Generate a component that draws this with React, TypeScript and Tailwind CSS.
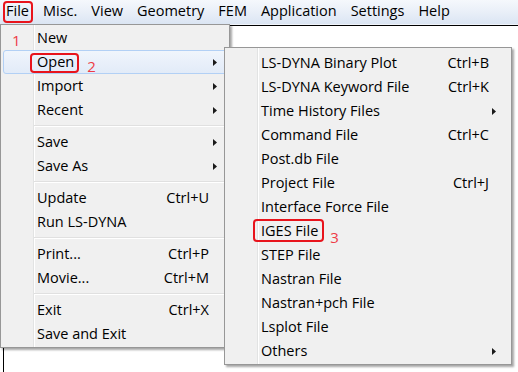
import React from 'react';

type Mark = { box: string; num?: string; numClass?: string };

type Item =
  | { sep: true }
  | { label: string; shortcut?: string; arrow?: boolean; active?: boolean; mark?: Mark; gutterNum?: string };

const fileItems: Item[] = [
  { label: 'New', gutterNum: '1' },
  { label: 'Open', arrow: true, active: true, mark: { box: '-left-[7px] -right-[5px] top-[2px] bottom-0', num: '2', numClass: 'ml-[13px] mt-[8px]' } },
  { label: 'Import', arrow: true },
  { label: 'Recent', arrow: true },
  { sep: true },
  { label: 'Save', arrow: true },
  { label: 'Save As', arrow: true },
  { sep: true },
  { label: 'Update', shortcut: 'Ctrl+U' },
  { label: 'Run LS-DYNA' },
  { sep: true },
  { label: 'Print...', shortcut: 'Ctrl+P' },
  { label: 'Movie...', shortcut: 'Ctrl+M' },
  { sep: true },
  { label: 'Exit', shortcut: 'Ctrl+X' },
  { label: 'Save and Exit' },
];

const openItems: Item[] = [
  { label: 'LS-DYNA Binary Plot', shortcut: 'Ctrl+B' },
  { label: 'LS-DYNA Keyword File', shortcut: 'Ctrl+K' },
  { label: 'Time History Files', arrow: true },
  { label: 'Command File', shortcut: 'Ctrl+C' },
  { label: 'Post.db File' },
  { label: 'Project File', shortcut: 'Ctrl+J' },
  { label: 'Interface Force File' },
  { label: 'IGES File', mark: { box: '-left-[8px] -right-[6px] -top-[1px] bottom-0', num: '3', numClass: 'ml-[12px] mt-[12px]' } },
  { label: 'STEP File' },
  { label: 'Nastran File' },
  { label: 'Nastran+pch File' },
  { label: 'Lsplot File' },
  { label: 'Others', arrow: true },
];

const menuBar = ['File', 'Misc.', 'View', 'Geometry', 'FEM', 'Application', 'Settings', 'Help'];

const redBox = 'absolute border-2 border-[#e8141c] rounded-[4px] pointer-events-none';
const redNum = 'text-[15px] leading-none text-[#ee3b47]';

const Arrow = () => (
  <svg width="4" height="7" viewBox="0 0 4 7" className="shrink-0">
    <polygon points="0,0 4,3.5 0,7" fill="#1a1a1a" />
  </svg>
);

const MenuRows = ({ items, shortcutRight, arrowRight }: { items: Item[]; shortcutRight: string; arrowRight: string }) => (
  <>
    {items.map((it, i) =>
      'sep' in it ? (
        <div key={i} className="h-[8px] pl-[33px] pr-[2px] flex flex-col justify-center">
          <div className="h-px bg-[#e0e0e0]" />
          <div className="h-px bg-white" />
        </div>
      ) : (
        <div
          key={i}
          className={`h-[24px] flex items-stretch mx-[2px] border ${
            it.active
              ? 'rounded-[3px] border-[#b2d0f5] bg-gradient-to-b from-[#f0f5fc] to-[#e2ebf8]'
              : 'border-transparent'
          }`}
        >
          <div className="w-[33px] shrink-0 flex items-center pl-[8px]">
            {it.gutterNum && <span className={`${redNum} mt-[4px]`}>{it.gutterNum}</span>}
          </div>
          <div className="flex-1 flex items-center whitespace-nowrap">
            <span className="relative h-full flex items-center">
              {it.label}
              {it.mark && <span className={`${redBox} ${it.mark.box}`} />}
            </span>
            {it.mark?.num && <span className={`${redNum} ${it.mark.numClass}`}>{it.mark.num}</span>}
          </div>
          {it.shortcut && <span className={`flex items-center whitespace-nowrap ${shortcutRight}`}>{it.shortcut}</span>}
          {it.arrow && (
            <span className={`flex items-center ${arrowRight}`}>
              <Arrow />
            </span>
          )}
        </div>
      )
    )}
  </>
);

const menuPanel =
  'absolute border border-[#979797] shadow-[2px_2px_2px_rgba(0,0,0,0.35)] bg-[linear-gradient(to_right,#f0f0f0_32px,#e2e3e3_32px,#e2e3e3_33px,#ffffff_33px,#ffffff_34px,#f0f0f0_34px)]';

export default function App() {
  return (
    <div
      className="relative w-[518px] h-[372px] overflow-hidden bg-white text-[14.5px] text-black"
      style={{ fontFamily: '"Segoe UI", "Open Sans", "Noto Sans", sans-serif' }}
    >
      {/* menu bar */}
      <div className="h-[25px] flex items-start pl-[6px] gap-[14px] bg-gradient-to-b from-[#f5f8fc] via-[#e9eff8] to-[#dbe5f3] border-b border-[#f0f4fa]">
        {menuBar.map((m) => (
          <span key={m} className="relative h-[23px] flex items-center leading-none">
            {m}
            {m === 'File' && <span className={`${redBox} -left-[3px] -right-[4px] top-[1px] bottom-0`} />}
          </span>
        ))}
      </div>
      {/* child window */}
      <div className="ml-[3px] h-[347px] border-t border-l border-black bg-white" />

      {/* File menu */}
      <div className={`${menuPanel} left-0 top-[24px] w-[230px] py-px`}>
        <MenuRows items={fileItems} shortcutRight="pr-[17px]" arrowRight="pr-[9px]" />
      </div>

      {/* Open submenu */}
      <div className={`${menuPanel} left-[224px] top-[47px] w-[288px] pt-[3px] pb-px`}>
        <MenuRows items={openItems} shortcutRight="pr-[19px]" arrowRight="pr-[12px]" />
      </div>
    </div>
  );
}
